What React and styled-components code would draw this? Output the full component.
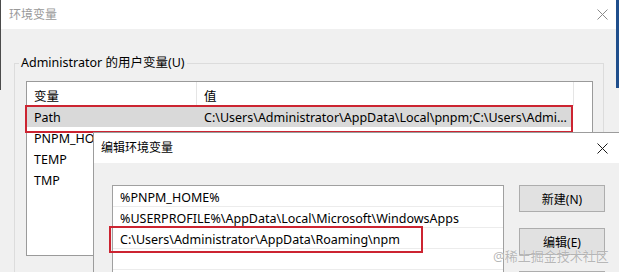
import React from "react";
import styled, { createGlobalStyle } from "styled-components";

const GlobalStyle = createGlobalStyle`
  html, body { margin: 0; padding: 0; background: #f0f0f0; overflow: hidden; }
  body {
    font-family: "Noto Sans", "Noto Sans CJK SC", sans-serif;
    font-size: 12.5px;
    color: #000;
  }
`;

const Screen = styled.div`
  position: relative;
  width: 619px;
  height: 272px;
  overflow: hidden;
  display: flex;
  background: #f0f0f0;
`;

const LeftEdge = styled.div`
  width: 1px;
  flex: none;
  background: linear-gradient(#4b4b4b 0 90px, #f0f0f0 90px);
`;

const RightEdge = styled.div`
  width: 3px;
  flex: none;
  background: linear-gradient(#1f4e8c 0 88px, #f0f0f0 88px);
`;

const Window = styled.div`
  width: 615px;
  flex: none;
  display: flex;
  flex-direction: column;
  background: #f0f0f0;
`;

const TitleBar = styled.div`
  height: ${(p) => p.$h}px;
  flex: none;
  display: flex;
  align-items: center;
  justify-content: space-between;
  background: #fff;
  padding-left: ${(p) => p.$pad}px;
`;

const Title = styled.span`
  color: ${(p) => (p.$active ? "#000" : "#999")};
  font-size: 12px;
  line-height: 16px;
`;

const CloseBtn = styled.div`
  width: ${(p) => p.$w}px;
  height: 100%;
  display: flex;
  align-items: center;
  justify-content: center;
`;

const Body = styled.div`
  padding: 26px 12px 0 13px;
  flex: 1;
`;

const Group = styled.fieldset`
  margin: 0;
  border: 1px solid #dcdcdc;
  padding: 10px 10px 20px 11px;
  min-width: 0;
`;

const Legend = styled.legend`
  padding: 0 2px;
  margin-left: -7px;
  line-height: 16px;
`;

const ListView = styled.div`
  width: 567px;
  height: 175px;
  box-sizing: border-box;
  border: 1px solid #9a9a9a;
  background: #fff;
  overflow: hidden;
`;

const HeaderRow = styled.div`
  display: flex;
  height: 24px;
`;

const HeaderCell = styled.div`
  width: ${(p) => p.$w}px;
  box-sizing: border-box;
  border-right: 1px solid #e5e5e5;
  padding: 2px 0 0 7px;
  display: flex;
  align-items: center;
  white-space: nowrap;
`;

const Row = styled.div`
  display: flex;
  width: 546px;
  height: 21px;
  align-items: center;
  background: ${(p) => (p.$selected ? "#d9d9d9" : "transparent")};
`;

const Cell = styled.div`
  width: ${(p) => p.$w}px;
  box-sizing: border-box;
  padding: 2px 1px 0 7px;
  white-space: nowrap;
  overflow: ${(p) => (p.$clip ? "hidden" : "visible")};
  text-overflow: ellipsis;
`;

const Dialog = styled.div`
  position: absolute;
  left: 93px;
  top: 132px;
  width: 533px;
  height: 180px;
  box-sizing: border-box;
  border: 1px solid #9c9c9c;
  background: #f0f0f0;
  display: flex;
  flex-direction: column;
`;

const DialogBody = styled.div`
  display: flex;
  padding: 22px 0 0 18px;
  gap: 15px;
`;

const ListBox = styled.div`
  width: 392px;
  height: 140px;
  box-sizing: border-box;
  border: 1px solid #a0a0a0;
  background: #fff;
`;

const ListItem = styled.div`
  height: 21px;
  box-sizing: border-box;
  border-bottom: 1px solid #ececec;
  padding: 2px 0 0 7px;
  display: flex;
  align-items: center;
  white-space: nowrap;
`;

const Buttons = styled.div`
  display: flex;
  flex-direction: column;
  gap: 16px;
`;

const Button = styled.div`
  width: 86px;
  height: 27px;
  box-sizing: border-box;
  border: 1px solid #adadad;
  background: #e1e1e1;
  display: flex;
  align-items: center;
  justify-content: center;
  font-size: 12px;
`;

const Mark = styled.div`
  position: absolute;
  left: ${(p) => p.$x}px;
  top: ${(p) => p.$y}px;
  width: ${(p) => p.$w}px;
  height: ${(p) => p.$h}px;
  box-sizing: border-box;
  border: 2px solid #cc2431;
  pointer-events: none;
`;

const Watermark = styled.div`
  position: absolute;
  left: 493px;
  top: 247px;
  font-size: 13px;
  line-height: 18px;
  color: rgba(160, 160, 160, 0.75);
  text-shadow: 0 0 1px #fff;
  white-space: nowrap;
`;

const XIcon = ({ color }) => (
  <svg width="11" height="11" viewBox="0 0 11 11">
    <path d="M0.5 0.5 L10.5 10.5 M10.5 0.5 L0.5 10.5" stroke={color} strokeWidth="1" fill="none" />
  </svg>
);

const rows = [
  { name: "Path", value: "C:\\Users\\Administrator\\AppData\\Local\\pnpm;C:\\Users\\Administrator\\AppData\\Roaming\\npm", selected: true },
  { name: "PNPM_HOME", value: "C:\\Users\\Administrator\\AppData\\Local\\pnpm" },
  { name: "TEMP", value: "%USERPROFILE%\\AppData\\Local\\Temp" },
  { name: "TMP", value: "%USERPROFILE%\\AppData\\Local\\Temp" },
];

const paths = [
  "%PNPM_HOME%",
  "%USERPROFILE%\\AppData\\Local\\Microsoft\\WindowsApps",
  "C:\\Users\\Administrator\\AppData\\Roaming\\npm",
  "",
  "",
  "",
];

export default function App() {
  return (
    <>
      <GlobalStyle />
      <Screen>
        <LeftEdge />
        <Window>
          <TitleBar $h={29} $pad={8}>
            <Title>环境变量</Title>
            <CloseBtn $w={28}>
              <XIcon color="#8a8a8a" />
            </CloseBtn>
          </TitleBar>
          <Body>
            <Group>
              <Legend>Administrator 的用户变量(U)</Legend>
              <ListView>
                <HeaderRow>
                  <HeaderCell $w={170}>变量</HeaderCell>
                  <HeaderCell $w={377}>值</HeaderCell>
                </HeaderRow>
                {rows.map((r) => (
                  <Row key={r.name} $selected={r.selected}>
                    <Cell $w={170}>{r.name}</Cell>
                    <Cell $w={376} $clip>{r.value}</Cell>
                  </Row>
                ))}
              </ListView>
            </Group>
          </Body>
        </Window>
        <RightEdge />

        <Mark $x={25} $y={105} $w={548} $h={28} />

        <Dialog>
          <TitleBar $h={30} $pad={7}>
            <Title $active>编辑环境变量</Title>
            <CloseBtn $w={46}>
              <XIcon color="#1a1a1a" />
            </CloseBtn>
          </TitleBar>
          <DialogBody>
            <ListBox>
              {paths.map((p, i) => (
                <ListItem key={i}>{p}</ListItem>
              ))}
            </ListBox>
            <Buttons>
              <Button>新建(N)</Button>
              <Button>编辑(E)</Button>
              <Button>浏览(B)...</Button>
            </Buttons>
          </DialogBody>
        </Dialog>

        <Mark $x={109} $y={226} $w={314} $h={27} />
        <Watermark>@稀土掘金技术社区</Watermark>
      </Screen>
    </>
  );
}
